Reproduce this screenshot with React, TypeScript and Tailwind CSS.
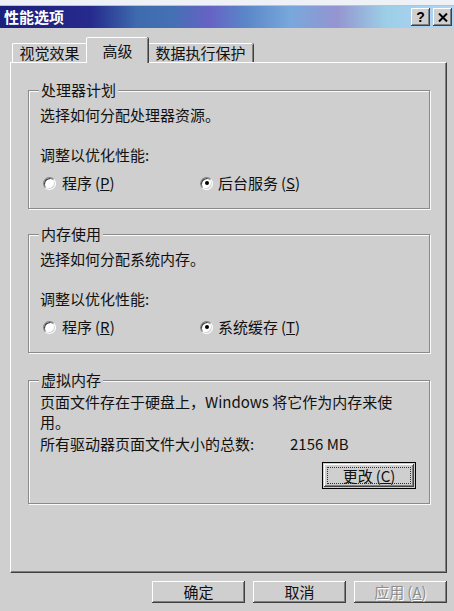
import React from "react";

function Radio({ checked }: { checked?: boolean }) {
  return (
    <span className="flex items-center justify-center w-[13px] h-[13px] rounded-full bg-white border border-t-[#808080] border-l-[#808080] border-r-white border-b-white shadow-[inset_1px_1px_0_#404040,inset_-1px_-1px_0_#d0d0d0] shrink-0">
      {checked && <span className="w-[4px] h-[4px] rounded-full bg-black" />}
    </span>
  );
}

function Group({
  title,
  className,
  children,
}: {
  title: string;
  className?: string;
  children: React.ReactNode;
}) {
  return (
    <div
      className={`relative border border-[#8a8a8a] shadow-[inset_1px_1px_0_#fafafa,1px_1px_0_#fafafa] pl-[11px] ${className ?? ""}`}
    >
      <span className="absolute left-[10px] -top-[11px] px-[2px] bg-[#cfcfcf] leading-[20px]">
        {title}
      </span>
      {children}
    </div>
  );
}

function WinButton({
  children,
  disabled,
}: {
  children: React.ReactNode;
  disabled?: boolean;
}) {
  return (
    <div className="w-[93px] h-[22px] flex items-center justify-center bg-[#cfcfcf] shadow-[inset_-1px_-1px_0_#404040,inset_1px_1px_0_#fff,inset_-2px_-2px_0_#808080] leading-[20px]">
      <span
        className={
          disabled
            ? "text-[#8c8c8c] [text-shadow:1px_1px_0_#fff]"
            : "text-[#111]"
        }
      >
        {children}
      </span>
    </div>
  );
}

export default function App() {
  return (
    <div className="w-[454px] h-[611px] bg-[#cfcfcf] font-['Noto_Sans_CJK_SC',sans-serif] text-[15px] text-[#111] overflow-hidden flex flex-col">
      {/* top strip */}
      <div className="h-[6px] bg-[#eef2f6] border-b border-[#a9c6e6] shrink-0" />

      {/* title bar */}
      <div className="h-[22px] shrink-0 flex items-center justify-between pl-[4px] pr-[2px] bg-[linear-gradient(90deg,#1b1f7c_0%,#252a8c_20%,#3e6aae_30%,#4470b4_38%,#6662c4_46%,#5a86c8_54%,#78a8dc_64%,#9494d0_74%,#9ccfe6_85%,#a8d0f0_92%,#b2d6f4_100%)]">
        <span className="text-white font-bold text-[15px] leading-[20px]">性能选项</span>
        <div className="flex gap-[3px]">
          <div className="w-[19px] h-[18px] flex items-center justify-center bg-[#cfcfcf] shadow-[inset_-1px_-1px_0_#404040,inset_1px_1px_0_#fff,inset_-2px_-2px_0_#808080]">
            <span className="font-['Liberation_Sans',sans-serif] font-bold text-[14px] leading-[14px] text-black">?</span>
          </div>
          <div className="w-[19px] h-[18px] flex items-center justify-center bg-[#cfcfcf] shadow-[inset_-1px_-1px_0_#404040,inset_1px_1px_0_#fff,inset_-2px_-2px_0_#808080]">
            <svg width="10" height="9" viewBox="0 0 10 9">
              <path d="M1 0.5 L9 8.5 M9 0.5 L1 8.5" stroke="#000" strokeWidth="2" />
            </svg>
          </div>
        </div>
      </div>

      {/* tabs */}
      <div className="h-[34px] shrink-0 flex items-end pl-[12px]">
        <div className="w-[74px] h-[19px] flex items-center justify-center border-t border-l border-white rounded-tl-[2px] leading-[20px]">
          视觉效果
        </div>
        <div className="relative z-10 -mb-px w-[62px] h-[26px] flex items-start justify-center pt-[3px] bg-[#cfcfcf] border-t border-l border-white rounded-t-[2px] shadow-[inset_-1px_0_0_#808080,1px_0_0_#404040] leading-[20px]">
          高级
        </div>
        <div className="w-[105px] h-[19px] flex items-center justify-center border-t border-white shadow-[inset_-1px_0_0_#808080,1px_0_0_#404040] rounded-tr-[2px] leading-[20px]">
          数据执行保护
        </div>
      </div>

      {/* panel */}
      <div className="ml-[10px] w-[437px] h-[511px] shrink-0 border-l border-t border-white border-r border-r-[#404040] border-b border-b-[#404040] shadow-[inset_-1px_-1px_0_#808080] pt-[27px] pl-[17px] pr-[16px] flex flex-col">
        <Group title="处理器计划" className="pt-[14px] pb-[15px]">
          <div className="leading-[20px]">选择如何分配处理器资源。</div>
          <div className="leading-[20px] mt-[20px]">调整以优化性能:</div>
          <div className="flex items-center h-[20px] mt-[8px] pl-[3px] leading-[20px]">
            <div className="w-[157px] flex items-center gap-[6px]">
              <Radio />
              <span>
                程序<span className="ml-[3px]">(<span className="underline">P</span>)</span>
              </span>
            </div>
            <div className="flex items-center gap-[5px]">
              <Radio checked />
              <span>
                后台服务<span className="ml-[3px]">(<span className="underline">S</span>)</span>
              </span>
            </div>
          </div>
        </Group>

        <Group title="内存使用" className="mt-[25px] pt-[14px] pb-[15px]">
          <div className="leading-[20px]">选择如何分配系统内存。</div>
          <div className="leading-[20px] mt-[20px]">调整以优化性能:</div>
          <div className="flex items-center h-[20px] mt-[8px] pl-[3px] leading-[20px]">
            <div className="w-[157px] flex items-center gap-[6px]">
              <Radio />
              <span>
                程序<span className="ml-[3px]">(<span className="underline">R</span>)</span>
              </span>
            </div>
            <div className="flex items-center gap-[5px]">
              <Radio checked />
              <span>
                系统缓存<span className="ml-[3px]">(<span className="underline">T</span>)</span>
              </span>
            </div>
          </div>
        </Group>

        <Group title="虚拟内存" className="mt-[27px] pt-[11px] pb-[14px] pr-[13px]">
          <div className="leading-[20px]">
            页面文件存在于硬盘上，Windows 将它作为内存来使
            <br />
            用。
          </div>
          <div className="leading-[20px] mt-[2px] flex">
            <span className="w-[250px]">所有驱动器页面文件大小的总数:</span>
            <span>2156 MB</span>
          </div>
          <div className="flex justify-end mt-[8px]">
            <div className="w-[94px] h-[27px] border border-black p-[1px] bg-[#cfcfcf]">
              <div className="w-full h-full shadow-[inset_-1px_-1px_0_#404040,inset_1px_1px_0_#fff,inset_-2px_-2px_0_#808080] p-[3px]">
                <div className="w-full h-full border border-dotted border-[#333] flex items-center justify-center leading-[18px]">
                  更改<span className="ml-[3px]">(<span className="underline">C</span>)</span>
                </div>
              </div>
            </div>
          </div>
        </Group>
      </div>

      {/* bottom buttons */}
      <div className="flex justify-end gap-[8px] pr-[7px] mt-[8px]">
        <WinButton>确定</WinButton>
        <WinButton>取消</WinButton>
        <WinButton disabled>
          应用<span className="ml-[3px]">(<span className="underline">A</span>)</span>
        </WinButton>
      </div>
    </div>
  );
}
